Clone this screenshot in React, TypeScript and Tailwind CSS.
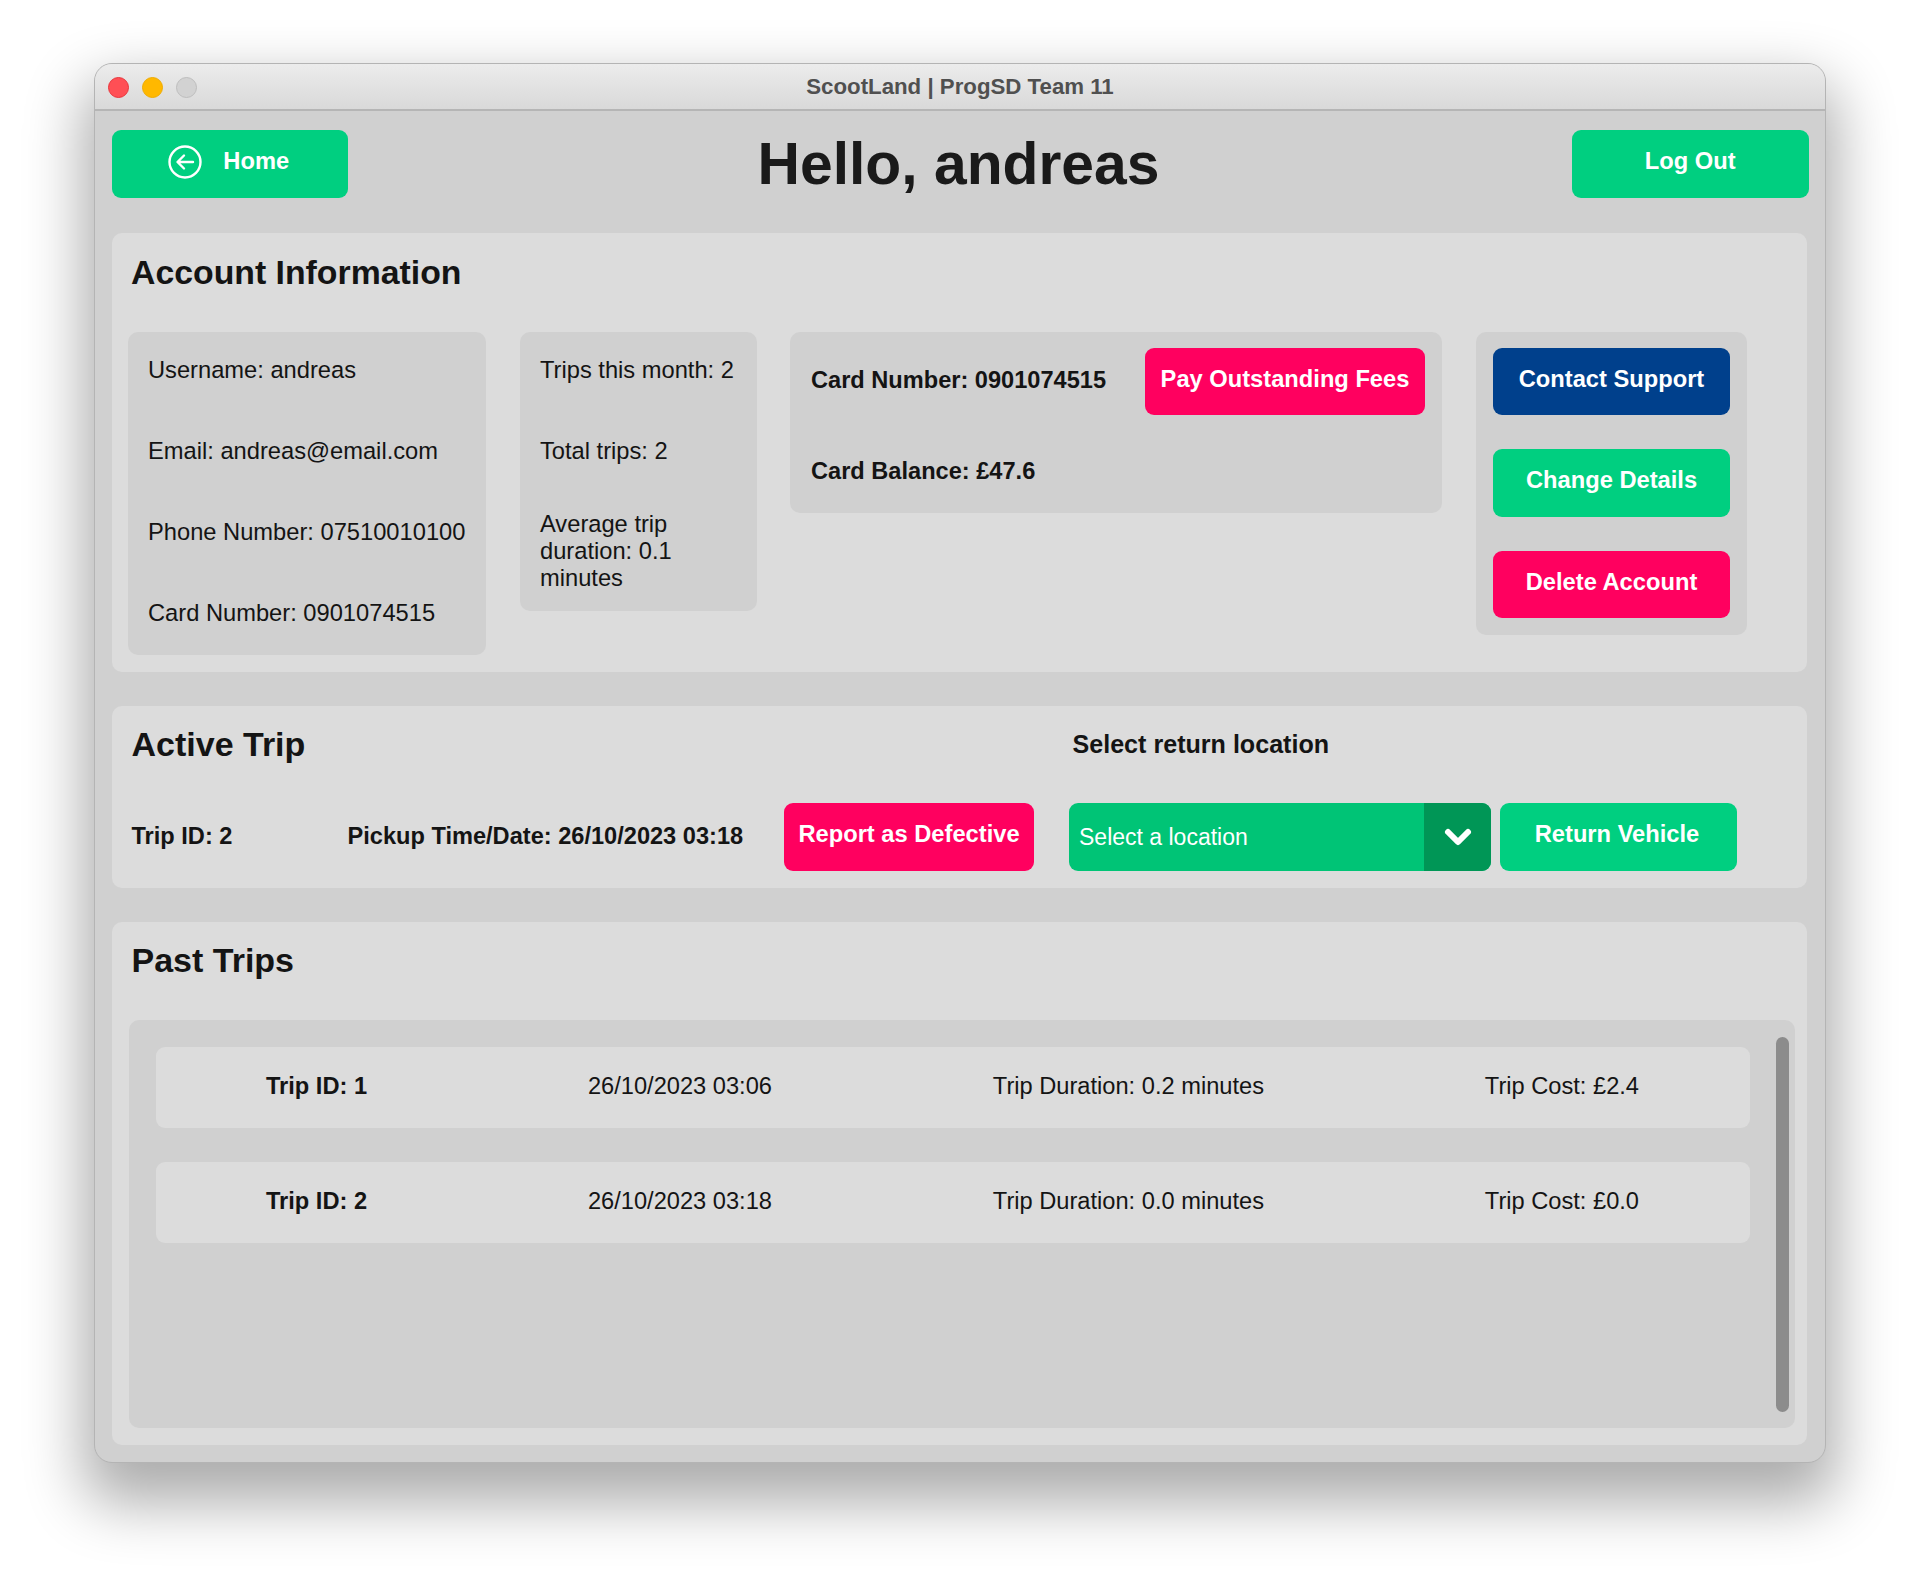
const font = { fontFamily: '"Liberation Sans", Arial, sans-serif' };

function ActionButton({ label, color, className = "" }: { label: string; color: string; className?: string }) {
  return (
    <button className={`h-[67.5px] rounded-[9px] pb-[4px] text-[23.7px] font-bold text-white ${color} ${className}`}>
      {label}
    </button>
  );
}

function PastTrip({ id, date, duration, cost }: { id: number; date: string; duration: string; cost: string }) {
  return (
    <div className="flex h-[81px] items-center justify-around rounded-[9px] bg-[#dcdcdc] pb-[3px] text-[23.65px] leading-[28px] text-[#141414]">
      <span className="font-bold">Trip ID: {id}</span>
      <span>{date}</span>
      <span>Trip Duration: {duration} minutes</span>
      <span>Trip Cost: £{cost}</span>
    </div>
  );
}

export default function App() {
  return (
    <div className="h-[1587px] w-[1920px] bg-white pl-[94px] pt-[63px]" style={font}>
      <div className="flex h-[1400px] w-[1732px] flex-col overflow-hidden rounded-[18px] border border-[#b4b4b4] bg-[#d0d0d0] shadow-[0_30px_60px_10px_rgba(0,0,0,0.33)]">
        {/* title bar */}
        <div className="relative flex h-[47px] shrink-0 items-center justify-center border-b-2 border-[#b5b5b5] bg-gradient-to-b from-[#ececec] to-[#d9d9d9]">
          <div className="absolute left-[13px] top-[12.5px] flex gap-[13px]">
            <span className="h-[21px] w-[21px] rounded-full border border-[#e8343a] bg-[#ff4f55]" />
            <span className="h-[21px] w-[21px] rounded-full border border-[#eeab00] bg-[#ffb800]" />
            <span className="h-[21px] w-[21px] rounded-full border border-[#bdbdbd] bg-[#d2d2d2]" />
          </div>
          <span className="text-[22.25px] font-bold text-[#505050]">ScootLand | ProgSD Team 11</span>
        </div>

        <div className="flex flex-1 flex-col px-[16.5px] pt-[19px]">
          {/* header */}
          <div className="flex h-[67.5px] items-center justify-between">
            <button className="flex h-[67.5px] w-[236.5px] items-center justify-center gap-[21px] rounded-[9px] bg-[#00cf80] pb-[4px] pr-[2px] text-[23.7px] font-bold text-white">
              <svg width="34" height="34" viewBox="0 0 34 34" fill="none" stroke="white" strokeWidth="2.4" strokeLinecap="round" strokeLinejoin="round">
                <circle cx="17" cy="17" r="15.5" />
                <path d="M25 17H10M16 10.5 9.5 17l6.5 6.5" />
              </svg>
              Home
            </button>
            <h1 className="pr-[3px] text-[58.8px] font-bold leading-[67px] text-[#1a1a1a]">Hello, andreas</h1>
            <ActionButton label="Log Out" color="bg-[#00cf80]" className="w-[236.5px]" />
          </div>

          {/* account information */}
          <section className="mt-[35.5px] h-[439px] w-[1695.5px] rounded-[10px] bg-[#dcdcdc] pl-[16.5px] pt-[19.5px]">
            <h2 className="pl-[3px] text-[33.8px] font-bold leading-[39px] text-[#141414]">Account Information</h2>
            <div className="mt-[40px] flex items-start gap-[34px] text-[23.7px] leading-[27px] text-[#141414]">
              <div className="flex h-[323px] w-[358px] flex-col gap-[54px] rounded-[10px] bg-[#d0d0d0] pl-[20px] pt-[25px]">
                <p>Username: andreas</p>
                <p>Email: andreas@email.com</p>
                <p>Phone Number: 07510010100</p>
                <p>Card Number: 0901074515</p>
              </div>
              <div className="flex h-[279px] w-[237px] flex-col rounded-[10px] bg-[#d0d0d0] pl-[20px] pt-[25px]">
                <p>Trips this month: 2</p>
                <p className="mt-[54px]">Total trips: 2</p>
                <p className="mt-[46px]">Average trip<br />duration: 0.1<br />minutes</p>
              </div>
              <div className="-ml-px h-[181px] w-[652px] rounded-[10px] bg-[#d0d0d0] pl-[21px] pt-[16px] font-bold">
                <div className="flex items-center">
                  <p className="mb-[2px] w-[334px] text-[23.6px]">Card Number: 0901074515</p>
                  <ActionButton label="Pay Outstanding Fees" color="bg-[#ff005f]" className="w-[280px]" />
                </div>
                <p className="mt-[43px] text-[23.6px]">Card Balance: £47.6</p>
              </div>
              <div className="flex h-[303px] w-[271px] flex-col gap-[34px] rounded-[10px] bg-[#d0d0d0] px-[17px] pt-[16px]">
                <ActionButton label="Contact Support" color="bg-[#00408c]" />
                <ActionButton label="Change Details" color="bg-[#00cf80]" />
                <ActionButton label="Delete Account" color="bg-[#ff005f]" />
              </div>
            </div>
          </section>

          {/* active trip */}
          <section className="mt-[34px] h-[182px] w-[1695.5px] rounded-[10px] bg-[#dcdcdc] pl-[20px] pt-[19px] text-[#141414]">
            <div className="flex items-center">
              <h2 className="w-[941px] text-[34px] font-bold leading-[39px]">Active Trip</h2>
              <span className="text-[25.1px] font-bold">Select return location</span>
            </div>
            <div className="mt-[39px] flex items-center text-[23.6px] font-bold">
              <span className="w-[216px]">Trip ID: 2</span>
              <span className="w-[436.5px]">Pickup Time/Date: 26/10/2023 03:18</span>
              <ActionButton label="Report as Defective" color="bg-[#ff005f]" className="w-[250px]" />
              <div className="ml-[35px] flex h-[67.5px] w-[422px] overflow-hidden rounded-[9px] bg-[#00c476] font-normal text-white">
                <span className="flex flex-1 items-center pl-[10px] text-[23px]">Select a location</span>
                <span className="flex w-[67px] items-center justify-center bg-[#009656]">
                  <svg width="30" height="20" viewBox="0 0 30 20" fill="none" stroke="white" strokeWidth="6" strokeLinecap="round" strokeLinejoin="round">
                    <path d="M5 5l10 10L25 5" />
                  </svg>
                </span>
              </div>
              <ActionButton label="Return Vehicle" color="bg-[#00cf80]" className="ml-[9px] w-[237px] pr-[3px]" />
            </div>
          </section>

          {/* past trips */}
          <section className="mt-[34px] h-[523px] w-[1695.5px] rounded-[10px] bg-[#dcdcdc] pt-[19px]">
            <h2 className="pl-[20px] text-[34px] font-bold leading-[39px] text-[#141414]">Past Trips</h2>
            <div className="relative ml-[17px] mt-[40px] h-[408px] w-[1666px] rounded-[10px] bg-[#d0d0d0] pl-[27px] pt-[27px]">
              <div className="flex w-[1594px] flex-col gap-[34px]">
                <PastTrip id={1} date="26/10/2023 03:06" duration="0.2" cost="2.4" />
                <PastTrip id={2} date="26/10/2023 03:18" duration="0.0" cost="0.0" />
              </div>
              <div className="absolute right-[6px] top-[17px] h-[375px] w-[13px] rounded-full bg-[#8c8c8c]" />
            </div>
          </section>
        </div>
      </div>
    </div>
  );
}
